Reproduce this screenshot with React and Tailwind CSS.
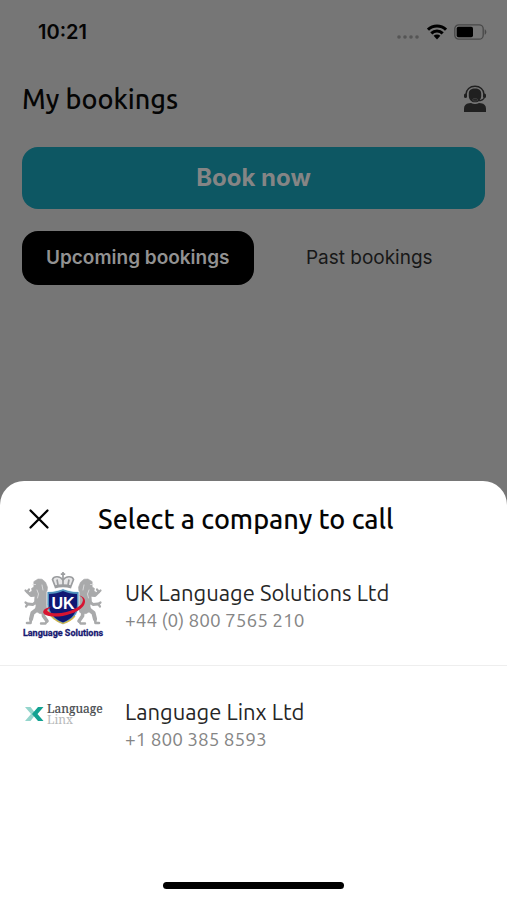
import React from "react";

const ubuntuLike = "font-['Ubuntu','Noto_Sans',sans-serif]";

function StatusBar() {
  return (
    <div className="flex h-16 items-center justify-between pr-5 pl-[38px]">
      <time className="font-['Inter',sans-serif] text-xl font-semibold text-[#050505]">10:21</time>
      <div className="flex items-center gap-[7px]">
        <svg aria-hidden="true" width="24" height="20" viewBox="0 0 24 20" fill="#555555">
          <circle cx="3" cy="15" r="1.8" />
          <circle cx="9" cy="15" r="1.8" />
          <circle cx="15" cy="15" r="1.8" />
          <circle cx="21" cy="15" r="1.8" />
        </svg>
        <svg aria-hidden="true" width="20" height="16" viewBox="0 0 20 16" fill="none" stroke="#000" strokeWidth="3">
          <path d="M1 5.7C6 .9 14 .9 19 5.7" />
          <path d="M4.3 9.4c3.2-3.1 8.2-3.1 11.400 0" />
          <path d="M6.6 11.8c1.9-1.7 4.9-1.7 6.800 0L10 15.4z" fill="#000" stroke="none" />
        </svg>
        <svg aria-hidden="true" width="33" height="16" viewBox="0 0 33 16">
          <rect x=".8" y=".8" width="28.4" height="14.4" rx="4" fill="none" stroke="#484848" strokeWidth="1.3" />
          <rect x="2.7" y="2.8" width="16.3" height="10.4" rx="1.8" fill="#000" />
          <path d="M30.7 5.3c2.2 1.1 2.2 4.3 0 5.4z" fill="#484848" />
        </svg>
      </div>
    </div>
  );
}

function SupportIcon() {
  return (
    <svg aria-hidden="true" width="24" height="28" viewBox="0 0 24 28">
      <path d="M3 10.5V9.5C3 4.5 7 1.2 12 1.2s9 3.3 9 8.3v1" fill="none" stroke="#202020" strokeWidth="1.4" />
      <rect x="1" y="8.5" width="3" height="4.5" rx="1.5" fill="#202020" />
      <rect x="20" y="8.5" width="3" height="4.5" rx="1.5" fill="#202020" />
      <path d="M5.8 8.5C5.8 5.2 8.2 3.6 12 3.6s6.2 1.6 6.2 4.9v2.4c0 3.4-2.8 6.4-6.2 6.4s-6.2-3-6.2-6.4z" fill="#202020" />
      <path d="M21.4 12.5c-.8 2.3-3.3 3.3-7.2 3.2" fill="none" stroke="#202020" strokeWidth="1.2" />
      <rect x="9.7" y="13.7" width="4.8" height="2.3" rx="1.1" fill="#202020" stroke="#606060" strokeWidth=".5" />
      <path d="M1 27v-3.3c0-3.1 1.8-5 5-5.400l2-.3c2.2 1.4 5.8 1.4 8 0l2 .3c3.2.4 5 2.300 5 5.400V27z" fill="#202020" />
    </svg>
  );
}

function Lion() {
  return (
    <g fill="#a9aaab" stroke="#a9aaab" strokeLinejoin="round" strokeLinecap="round">
      <path strokeWidth=".6" d="M12 9.500 16 7l4 .2 3.500 3 2 5-.5 4.500 2.500 5 .5 6-2 5-2 5-6 1-5-3 1-5-1.500-5 .5-5.500-2.500-1-2.500.5-.5-2 2.500-2-.5-2.200 2.200-1.500z" />
      <path strokeWidth="3" fill="none" d="M15 23 9 23.500 5.500 20M16 28l-5 4.500-5-.5" />
      <path strokeWidth="2.200" fill="none" d="m5 20-1.500-1.500M5.500 19.500 7 17.500M5.500 32l-2-1.500M5.500 32.500 4 34.500" />
      <path strokeWidth="4.200" fill="none" d="m17 36-6.500 5L9 47" />
      <path strokeWidth="2.600" fill="none" d="m9 47-.5 4H5" />
      <path strokeWidth="3.600" fill="none" d="m21 39 .5 5 3.500 5" />
      <path strokeWidth="2.400" fill="none" d="m25 49-1.500 2.500H19" />
      <path d="M11 12.500h2.500M15 18l1.500 4-1 4M20 13l1 5" fill="none" stroke="#dededf" strokeWidth=".9" />
    </g>
  );
}

function UkLogo() {
  return (
    <svg role="img" aria-label="UK Language Solutions" className="h-[68px] w-[82px] shrink-0" viewBox="0 0 82 68">
      <Lion />
      <g transform="translate(82 0) scale(-1 1)">
        <Lion />
      </g>
      <path d="M33 14.500 30.500 7.500C32 3.500 37 4 41 7c4-3 9-3.500 10.500.5L49 14.500z" fill="#e7e7e8" />
      <g fill="none" stroke="#9b9d9f" strokeWidth="1.700">
        <path d="M33 14 30.500 7.500C32 3.500 38 4 41 8c3-4 9-4.500 10.500-.5L49 14" />
        <path d="M36 13 35 7.500m6 5.500V4m5 9 1-5.500M41 0v4.500m-2.200-2.300h4.400" />
        <path d="M32.500 15c5-1.500 12-1.500 17 0" strokeWidth="3" />
      </g>
      <path d="M25 19.500c5.500.4 10.500-.9 16-2.800 5.500 1.900 10.500 3.200 16 2.800v13C57 42 51 48.500 41 52.500c-10-4-16-10.500-16-20z" fill="#4f91bd" stroke="#fff" strokeWidth=".8" />
      <path d="M27 22c5 0 9.500-1 14-3 4.500 2 9 3 14 3v10.500c0 8-5 14.500-14 18-9-3.500-14-10-14-18z" fill="#101774" />
      <path d="M26 39c3 6.500 7 10 15 12.500 5-1.500 9-4 12-7.500" fill="none" stroke="#d9b641" strokeWidth="1.300" />
      <path d="M57 23.500c6 2 5 8.200-2 12.200-8 4.500-18 6.300-25 5.300-6-.9-6-4 0-6.500-9 1.500-12 6.500-5 9 10 3.300 29-1 36-9 4-5 2-10-4-11z" fill="#d71431" />
      <text x="41" y="37" textAnchor="middle" fill="#fff" fontFamily="Liberation Sans, sans-serif" fontSize="16" fontWeight="700">UK</text>
      <text x="41" y="64" textAnchor="middle" fill="#171870" stroke="#171870" strokeWidth=".3" fontFamily="Roboto, sans-serif" fontSize="9" fontWeight="700">Language Solutions</text>
    </svg>
  );
}

function LinxLogo() {
  return (
    <svg role="img" aria-label="Language Linx" className="h-[68px] w-[82px] shrink-0" viewBox="0 0 82 68">
      <path d="M3 16h5.500l5.500 7-5.500 7H3l6-7z" fill="#94d5cc" />
      <path d="M21.500 16H16l-6 7 6 7h5.500l-6-7z" fill="#12a292" />
      <text x="25" y="22" fill="#44484c" stroke="#44484c" strokeWidth=".2" fontFamily="Noto Serif, Liberation Serif, serif" fontSize="12">Language</text>
      <text x="25" y="33" fill="#b7b9ba" fontFamily="Noto Serif, Liberation Serif, serif" fontSize="12">Linx</text>
    </svg>
  );
}

function Company({ logo, name, phone, href }) {
  return (
    <li className="border-b border-[#eeeeee] last:border-b-0">
      <a href={href} className="flex h-[118px] items-center gap-[21px] px-[22px]">
        {logo}
        <span className="flex min-w-0 flex-col">
          <span className="text-[22px] leading-7 text-[#262626]">{name}</span>
          <span className="text-[19px] leading-[26px] text-[#858585]">{phone}</span>
        </span>
      </a>
    </li>
  );
}

export default function App() {
  return (
    <div className={`flex min-h-screen flex-col bg-[#767676] ${ubuntuLike}`}>
      <StatusBar />
      <header className="flex h-[70px] items-center justify-between pr-5 pl-[22px]">
        <h1 className="text-[27px] leading-9 font-medium text-[#050505]">My bookings</h1>
        <button type="button" aria-label="Contact support">
          <SupportIcon />
        </button>
      </header>
      <main className="px-[22px] pt-[13px] font-['Inter',sans-serif]">
        <button type="button" className="h-[62px] w-full rounded-2xl bg-[#0d5763] text-2xl font-bold text-[#858585]">
          Book now
        </button>
        <div className="mt-[22px] grid grid-cols-2 text-[19px]">
          <button type="button" className="h-[54px] rounded-2xl bg-black font-semibold text-[#929292]">
            Upcoming bookings
          </button>
          <button type="button" className="h-[54px] text-[#181818]">
            Past bookings
          </button>
        </div>
      </main>
      <section role="dialog" aria-labelledby="sheet-title" className="mt-auto rounded-t-3xl bg-white">
        <div className="flex h-[66px] items-center gap-[46px] px-[26px] pt-[10px]">
          <button type="button" aria-label="Close">
            <svg aria-hidden="true" width="26" height="26" viewBox="0 0 26 26" fill="none" stroke="#000" strokeWidth="2.3" strokeLinecap="round">
              <path d="m4.500 4.500 17 17m0-17-17 17" />
            </svg>
          </button>
          <h2 id="sheet-title" className="text-[27px] leading-9 font-medium text-[#050505]">Select a company to call</h2>
        </div>
        <ul>
          <Company logo={<UkLogo />} name="UK Language Solutions Ltd" phone="+44 (0) 800 7565 210" href="tel:+448007565210" />
          <Company logo={<LinxLogo />} name="Language Linx Ltd" phone="+1 800 385 8593" href="tel:+18003858593" />
        </ul>
        <div className="flex justify-center pt-[98px] pb-[11px]">
          <div className="h-[7px] w-[181px] rounded-full bg-black" />
        </div>
      </section>
    </div>
  );
}
